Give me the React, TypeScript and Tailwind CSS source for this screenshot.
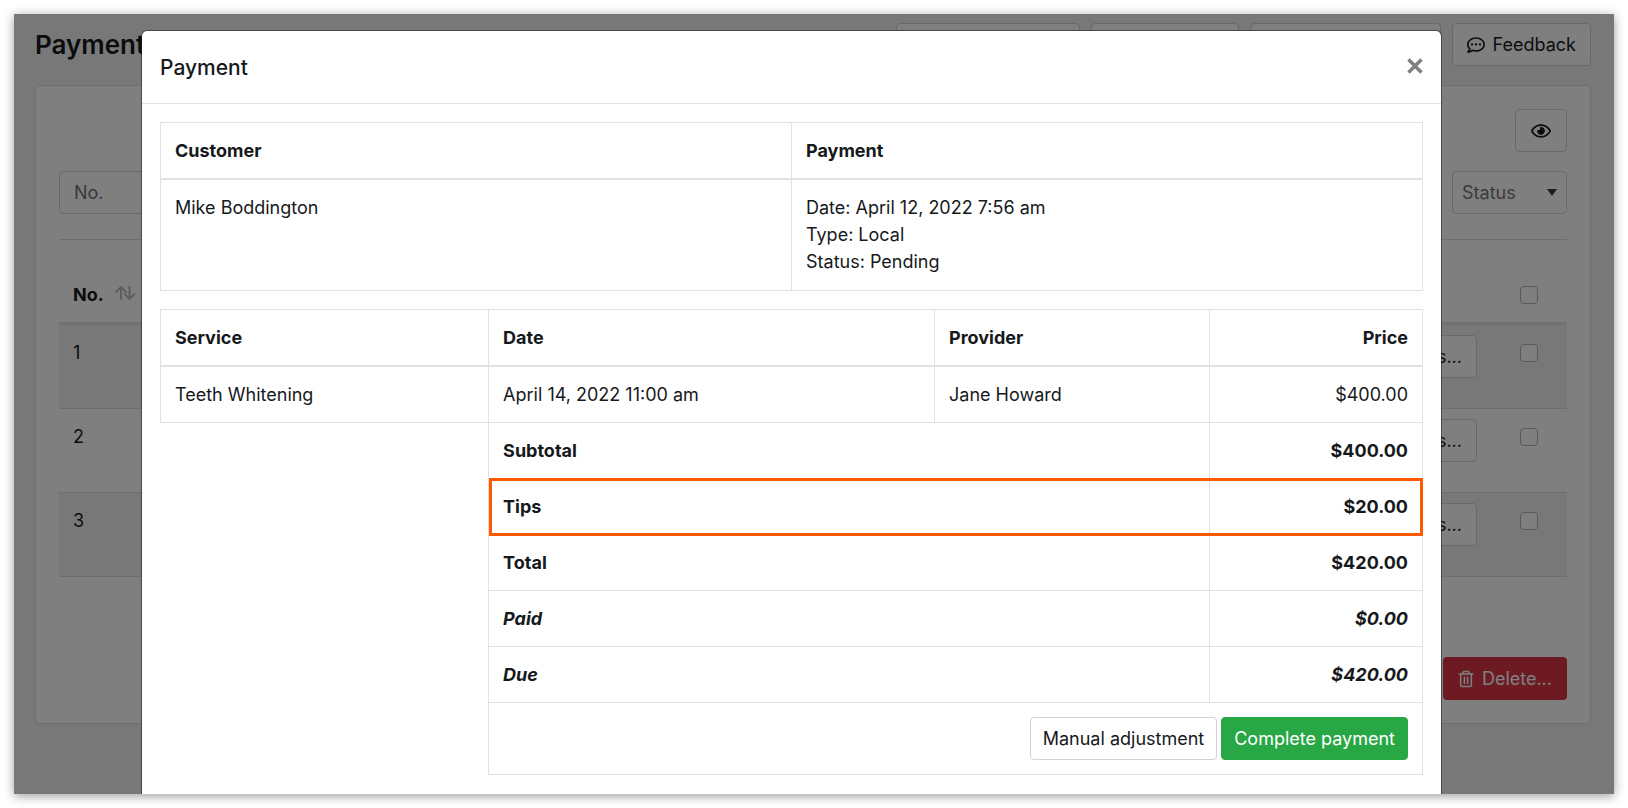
import { FaRegCommentDots, FaRegEye } from "react-icons/fa";

const ROWS = [1, 2, 3];

const TOTALS = [
  { label: "Subtotal", amount: "$400.00" },
  { label: "Tips", amount: "$20.00", highlight: true },
  { label: "Total", amount: "$420.00" },
  { label: "Paid", amount: "$0.00", italic: true },
  { label: "Due", amount: "$420.00", italic: true },
];

const button = "h-[43px] rounded border border-[#ced4da] bg-white";
const cell = "border border-[#dee2e6] p-3.5 align-top";
const headCell = "border border-b-2 border-[#dee2e6] p-3.5 font-bold";
const checkbox =
  "block size-[18px] appearance-none rounded border border-[#adb5bd] bg-white";

function SortIcon() {
  return (
    <svg
      viewBox="0 0 22 16"
      className="mb-1 h-4 w-[22px] fill-none stroke-[#bcbcbc] stroke-2"
      strokeLinecap="round"
      strokeLinejoin="round"
    >
      <path d="M2 7 L7 2 L12 7 M7 2.500 V14" />
      <path d="M10.500 9 L15.500 14 L20.500 9 M15.500 13.500 V2" />
    </svg>
  );
}

function TrashIcon() {
  return (
    <svg
      viewBox="0 0 18 20"
      className="h-[18px] w-4 fill-none stroke-current stroke-[1.7]"
      strokeLinejoin="round"
      strokeLinecap="round"
    >
      <path d="M1.500 4.500 H16.500 M5 4.300 L6.300 1.500 H11.700 L13 4.300" />
      <path d="M3 4.500 V17 Q3 18.500 4.500 18.500 H13.500 Q15 18.500 15 17 V4.500" />
      <path d="M7.200 8 V15 M10.800 8 V15" />
    </svg>
  );
}

function PaymentsPage() {
  return (
    <div className="h-full bg-[#f1f1f1] pt-[9px] pr-[23px] pl-[21px]">
      <header className="mb-[19px] flex items-center gap-[11px]">
        <h1 className="mr-auto text-[26px] leading-8 font-semibold">Payments</h1>
        <button className={`${button} w-[184px]`} />
        <button className={`${button} w-[148px]`} />
        <button className={`${button} w-[191px]`} />
        <button className={`${button} flex items-center gap-2 px-3.5`}>
          <FaRegCommentDots className="size-[18px]" />
          Feedback
        </button>
      </header>

      <section className="rounded border border-[#dcdcdc] bg-white p-[23px]">
        <div className="flex justify-end">
          <button className={`${button} flex w-[52px] items-center justify-center`}>
            <FaRegEye className="size-5" />
          </button>
        </div>

        <div className="mt-[19px] flex justify-between border-b border-[#dcdcdc] pb-[25px]">
          <input
            placeholder="No."
            className="h-[43px] w-40 rounded border border-[#ced4da] px-3.5 placeholder:text-[#6c757d]"
          />
          <div className="relative">
            <select className="h-[43px] w-[115px] appearance-none rounded border border-[#ced4da] px-[9px] text-[#777]">
              <option>Status</option>
            </select>
            <svg
              viewBox="0 0 10 7"
              className="pointer-events-none absolute top-[18px] right-2.5 h-[7px] w-2.5 fill-[#343a40]"
            >
              <path d="M0 0 H10 L5 7 Z" />
            </svg>
          </div>
        </div>

        <table className="mt-[27px] w-full border-separate border-spacing-0 text-left">
          <thead>
            <tr>
              <th className="border-b-3 border-[#dee2e6] p-3.5 font-bold">
                <span className="flex items-center gap-2.5">
                  No. <SortIcon />
                </span>
              </th>
              <th className="border-b-3 border-[#dee2e6]" />
              <th className="w-[90px] border-b-3 border-[#dee2e6]">
                <input type="checkbox" className={`${checkbox} ml-[43px]`} />
              </th>
            </tr>
          </thead>
          <tbody>
            {ROWS.map((n) => (
              <tr key={n} className="h-[84px] align-top odd:bg-[#f0f0f0]">
                <td className="border-b border-[#dcdcdc] p-3.5">{n}</td>
                <td className="border-b border-[#dcdcdc] pt-2.5 text-right">
                  <button className={`${button} w-24 px-3.5 text-right`}>s...</button>
                </td>
                <td className="border-b border-[#dcdcdc] pt-[19px]">
                  <input type="checkbox" className={`${checkbox} ml-[43px]`} />
                </td>
              </tr>
            ))}
          </tbody>
        </table>

        <div className="mt-20 flex justify-end">
          <button className="flex h-[43px] items-center gap-2 rounded bg-[#dc3545] px-[15px] text-white">
            <TrashIcon />
            Delete...
          </button>
        </div>
      </section>
    </div>
  );
}

function PaymentModal() {
  return (
    <div
      role="dialog"
      className="mt-4 mr-[172px] ml-[127px] rounded-md border border-black/40 bg-white bg-clip-padding"
    >
      <div className="flex items-center justify-between border-b border-[#dee2e6] px-[18px] pt-[22px] pb-5">
        <h2 className="text-[21px] leading-[30px] font-medium">Payment</h2>
        <button className="mb-1 text-[#7f7f7f]">
          <svg
            viewBox="0 0 16 16"
            className="size-4 fill-none stroke-current stroke-[3.5]"
          >
            <path d="M1.500 1.500 L14.500 14.500 M14.500 1.500 L1.500 14.500" />
          </svg>
        </button>
      </div>

      <div className="p-[18px]">
        <table className="mb-[18px] w-full table-fixed border-collapse text-left">
          <thead>
            <tr>
              <th className={headCell}>Customer</th>
              <th className={headCell}>Payment</th>
            </tr>
          </thead>
          <tbody>
            <tr>
              <td className={cell}>Mike Boddington</td>
              <td className={`${cell} pb-[15px]`}>
                Date: April 12, 2022 7:56 am
                <br />
                Type: Local
                <br />
                Status: Pending
              </td>
            </tr>
          </tbody>
        </table>

        <table className="mb-[18px] w-full table-fixed border-collapse text-left">
          <thead>
            <tr>
              <th className={`${headCell} w-[26%]`}>Service</th>
              <th className={headCell}>Date</th>
              <th className={`${headCell} w-[275px]`}>Provider</th>
              <th className={`${headCell} w-[213px] text-right`}>Price</th>
            </tr>
          </thead>
          <tbody>
            <tr>
              <td className={cell}>Teeth Whitening</td>
              <td className={cell}>April 14, 2022 11:00 am</td>
              <td className={cell}>Jane Howard</td>
              <td className={`${cell} text-right`}>$400.00</td>
            </tr>
            {TOTALS.map((t, i) => (
              <tr
                key={t.label}
                className={`relative font-bold ${t.italic ? "italic" : ""}`}
              >
                {i === 0 && <td rowSpan={TOTALS.length + 1} />}
                <td colSpan={2} className={cell}>
                  {t.label}
                  {t.highlight && (
                    <span className="absolute -top-px right-0 -bottom-px left-[26%] border-3 border-[#ff5a00]" />
                  )}
                </td>
                <td className={`${cell} text-right`}>{t.amount}</td>
              </tr>
            ))}
            <tr>
              <td colSpan={3} className={cell}>
                <div className="flex justify-end gap-1">
                  <button className={`${button} px-3`}>Manual adjustment</button>
                  <button className="h-[43px] rounded border border-[#28a745] bg-[#28a745] px-3 text-white">
                    Complete payment
                  </button>
                </div>
              </td>
            </tr>
          </tbody>
        </table>
      </div>
    </div>
  );
}

export default function App() {
  return (
    <main className="h-screen bg-white p-3.5 font-['Inter',sans-serif] text-[18px] leading-[27px] text-[#16191c]">
      <div className="relative h-full overflow-hidden shadow-[0_2px_10px_rgba(0,0,0,0.4)]">
        <PaymentsPage />
        <div className="absolute inset-0 overflow-hidden bg-black/50">
          <PaymentModal />
        </div>
      </div>
    </main>
  );
}
